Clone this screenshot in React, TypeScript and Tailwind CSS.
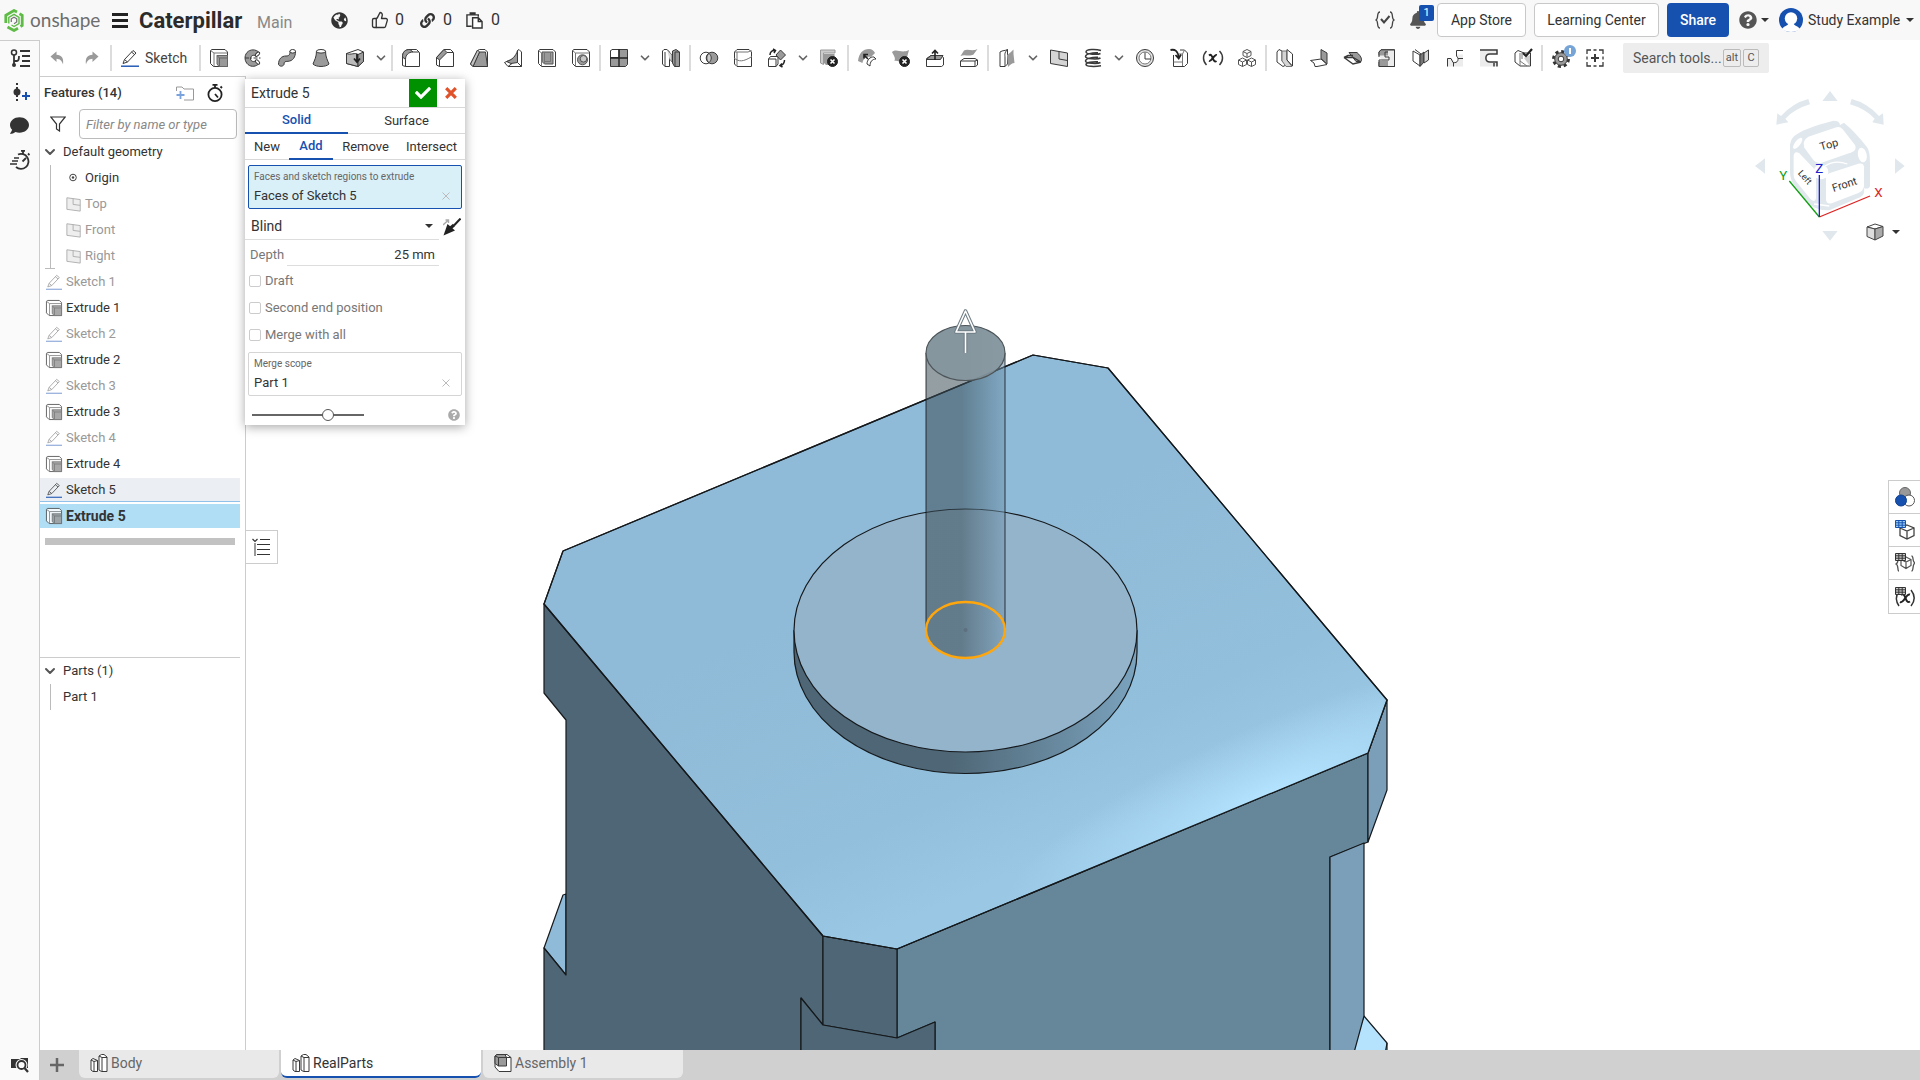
import { useState } from "react"
import type { ReactNode } from "react"
import { FaCheck, FaComment, FaLink, FaQuestionCircle, FaBell, FaGlobeAmericas } from "react-icons/fa"
import { ChevronDown, ThumbsUp } from "lucide-react"

const D = "#3a3a3a"
const G = "#9a9a9a"
const L = "#e4e4e4"

interface FeatureItem {
  name: string
  kind: "sketch" | "extrude"
  state?: "muted" | "related" | "selected"
}

const features: FeatureItem[] = [
  { name: "Sketch 1", kind: "sketch", state: "muted" },
  { name: "Extrude 1", kind: "extrude" },
  { name: "Sketch 2", kind: "sketch", state: "muted" },
  { name: "Extrude 2", kind: "extrude" },
  { name: "Sketch 3", kind: "sketch", state: "muted" },
  { name: "Extrude 3", kind: "extrude" },
  { name: "Sketch 4", kind: "sketch", state: "muted" },
  { name: "Extrude 4", kind: "extrude" },
  { name: "Sketch 5", kind: "sketch", state: "related" },
  { name: "Extrude 5", kind: "extrude", state: "selected" },
]

// All tool glyphs are drawn on an 18 x 18 grid
const glyphs: Record<string, ReactNode> = {
  undo: <path d="M2.500 7.500 L8.500 2.500 V5.800 C13.500 6 16 9 15 15.500 C13.800 11.500 12 10 8.500 9.800 V13 Z" fill={G} stroke="none" />,
  redo: <path d="M15.500 7.500 L9.500 2.500 V5.800 C4.500 6 2 9 3 15.500 C4.200 11.500 6 10 9.500 9.800 V13 Z" fill={G} stroke="none" />,
  extrude: (
    <>
      <path d="M.5 1.500 L2 .5 H15 L17.500 3 V17.500 H3.500 L.5 14.500 Z" fill="#fff" />
      <path d="M.5 1.500 L4 4 V17.500 M4 4 H17.500" stroke="#777" />
      <path d="M7 6.500 H17.500 V17.500 H9 L7 15 Z" fill={G} stroke="#666" />
      <path d="M7 6.500 L9.500 9 V17 M9.500 9 H17" stroke="#666" />
    </>
  ),
  revolve: (
    <>
      <path d="M15 3.500 C12 0 6 0 3 3.500 C0 7 .5 12.500 4 15.500 C7.500 18.500 12.500 17.500 15 14.500 L12 11.500 C10 13.500 7 12.500 6.500 10 C6 7.500 9 5 12 7 Z" fill={G} />
      <ellipse cx="13.500" cy="5.200" rx="2.600" ry="1.400" transform="rotate(-45 13.500 5.200)" fill="#fff" />
      <ellipse cx="13.500" cy="13" rx="2.600" ry="1.400" transform="rotate(45 13.500 13)" fill="#fff" />
      <path d="M1 9 H18" strokeDasharray="4 1.500 1.500 1.500" />
    </>
  ),
  sweep: (
    <>
      <path d="M12 2 C12 6 11 7 8 7 C3.500 7 .5 10 .5 15.500 C2 18 5 17.500 6 15.500 C6 12.500 7 12.500 10 12.300 C15 12 17.500 8 17.500 2.500 Z" fill={G} />
      <ellipse cx="14.700" cy="2.300" rx="2.800" ry="1.800" fill="#fff" />
    </>
  ),
  loft: (
    <>
      <path d="M4.500 2 C4.500 8 2.500 11 1 15 C4 18.300 14 18.300 17 15 C15.500 11 13.500 8 13.500 2 Z" fill={G} />
      <ellipse cx="9" cy="2.300" rx="4.500" ry="1.800" fill="#fff" />
    </>
  ),
  thicken: (
    <>
      <path d="M.5 4.500 L12 .5 L17.500 3 V12.500 L12 17.500 L.5 14.500 Z" fill="#fff" />
      <path d="M.5 4.500 C5 6.500 9 3 12 5.500 V17.500 L.5 14.500 Z" fill="#bbb" />
      <path d="M12 5.500 L17.500 3 V12.500 L12 17.500 Z" fill={G} />
      <path d="M11 5 V12 M8 9.500 L11 13 L14 9.500" strokeWidth="1.800" stroke="#222" />
    </>
  ),
  fillet: (
    <>
      <path d="M.5 16.500 V8 C.5 3 3 .5 8 .5 H14.500 L17.500 3.500 V17.500 H3.500 Z" fill="#fff" />
      <path d="M.5 8 C.5 3 3 .5 8 .5 L11 3 C6.500 3 3.500 6 3.500 10.500 Z" fill={G} />
      <path d="M3.500 10.500 V17.500 M11 3 H17" />
    </>
  ),
  chamfer: (
    <>
      <path d="M.5 16 V8.500 L8 .5 H14.500 L17.500 3.500 V17.500 H3.500 Z" fill="#fff" />
      <path d="M.5 8.500 L8 .5 L11 3.500 L3.500 11 Z" fill={G} />
      <path d="M3.500 11 V17.500 M11 3.500 H17" />
    </>
  ),
  draft: (
    <>
      <path d="M.5 15 L7.500 1.500 L9.500 .5 H15 L17.500 3 V17.500 H3 Z" fill="#fff" />
      <path d="M3 17.500 L9.500 3 H15.500 L17.500 17.500 Z" fill={G} />
      <path d="M.5 15 L7.500 1 L9.500 3 L3 17.500 Z" fill="#c4c4c4" />
    </>
  ),
  rib: (
    <>
      <path d="M.5 13.500 L5 11.500 L13.500 9 V1.500 L15 .5 L17.500 3 V17.500 H4 Z" fill="#fff" />
      <path d="M2.500 12.500 C8 11 12 7 13.500 1.500 V13.500 L7 14.500 Z" fill={G} />
      <path d="M13.500 13.500 L17.500 17.500 M4 17.500 L8 14.500" />
    </>
  ),
  shell: (
    <>
      <path d="M.5 1.500 L2 .5 H15 L17.500 3 V17.500 H3.500 L.5 14.500 Z" fill="#fff" />
      <path d="M4 3 H15 V15 H6.500 L4 12.500 Z" fill={G} stroke="#555" />
      <path d="M6.500 3 V15 M6.500 12.500 H12.500 V3 M.5 1.500 L3.500 4 V17.500" stroke="#777" />
    </>
  ),
  hole: (
    <>
      <path d="M.5 1.500 L2 .5 H15 L17.500 3 V17.500 H3.500 L.5 14.500 Z" fill="#fff" />
      <path d="M.5 1.500 L3.500 4 V17.500 M3.500 4 H17.500" stroke="#777" />
      <circle cx="10.500" cy="10.800" r="5" fill={G} stroke="#555" />
      <circle cx="11.500" cy="9.800" r="3.300" fill="#c8c8c8" stroke="#555" />
    </>
  ),
  pattern: (
    <>
      <path d="M.5 2 L2 .5 H17.500 V15.500 L15.500 17.500 H.5 Z" fill={G} />
      <path d="M.5 2 L2 .5 H9 V8.500 H.5 Z" fill="#fff" />
      <path d="M0 9 H18 M9 0 V18" stroke="#222" strokeWidth="1.400" />
    </>
  ),
  mirror: (
    <>
      <path d="M.5 2 L2 .5 H5 L7.500 3 V17.500 H3 L.5 15 Z M3 3 V17.500" fill="#fff" />
      <path d="M5 .5 L10 6 V13 L7.500 10" fill="#d8d8d8" stroke="#777" />
      <path d="M10.500 2 L14 .5 L17.500 3 V17.500 H12.500 L10.500 14 Z" fill={G} />
      <path d="M13 3 H17.500 M13 3 V17.500" />
    </>
  ),
  boolean: (
    <>
      <circle cx="6" cy="9" r="5.800" fill="#fff" />
      <circle cx="12" cy="9" r="5.800" fill={G} />
      <path d="M9 4.500 C6 7 6 11 9 13.500 C12 11 12 7 9 4.500 Z" fill="#ccc" />
    </>
  ),
  split: (
    <>
      <path d="M.5 3 L3 .5 H15 L17.500 3 V17.500 H3 L.5 15 Z" fill="#fff" />
      <path d="M.5 3 H14 L17.500 1.500 M3 3 V17" stroke="#777" />
      <path d="M0 9 C5 13 9 13 18 7.500" stroke="#777" />
    </>
  ),
  transform: (
    <>
      <path d="M.5 10 L2.500 7.500 H10 V15 L8 17.500 H.5 Z M.5 10 H8 V17.500" fill="#fff" />
      <path d="M12.500 1 L17.500 6 L12.500 11 L8 6 Z" fill={G} />
      <path d="M2 6 C2 3 4 1 7 1.500 M5 0 L7.500 1.500 L6 4 M16.500 11 C16.500 14 15 16 12 16.500 M14 14.500 L12 16.500 L14.500 18" stroke="#222" strokeWidth="1.500" />
    </>
  ),
  deletePart: (
    <>
      <path d="M.5 1 H15 V4 H3.500 V15.500 L.5 14 Z" fill="#ccc" stroke={G} />
      <path d="M4 5 H14.500 V16 H6 L4 14 Z" fill={G} stroke="none" />
      <circle cx="12.500" cy="12.500" r="5" fill="#222" stroke="#222" />
      <path d="M10.500 10.500 L14.500 14.500 M14.500 10.500 L10.500 14.500" stroke="#fff" strokeWidth="1.600" />
    </>
  ),
  modifyFillet: (
    <>
      <path d="M0 12 C1 4 5 0 11 0 C14 0 16 2 17 4 L13 8 C10 7 5 9 4.500 14 Z" fill={G} stroke="none" />
      <path d="M9 15 C9 11 12 7.500 16 8 L18 10 C14 10 12 13 12 17 Z" fill="#fff" />
      <path d="M10 10 L6 6 M6 9.500 V5.500 H10" stroke="#222" strokeWidth="1.600" />
    </>
  ),
  deleteFace: (
    <>
      <path d="M0 3 C5 -1 9 5 17 1 L14 12 C10 15 6 11 2.500 12 C4 8 1 6 0 3 Z" fill={G} stroke="none" />
      <circle cx="12.500" cy="12.500" r="5" fill="#222" stroke="#222" />
      <path d="M10.500 10.500 L14.500 14.500 M14.500 10.500 L10.500 14.500" stroke="#fff" strokeWidth="1.600" />
    </>
  ),
  moveFace: (
    <>
      <path d="M.5 9.500 L5 6.500 H15 L17.500 8.500 V16 L15.500 17.500 H.5 Z" fill="#fff" />
      <path d="M.5 10.500 L5 6.500 H17 L14.500 10.500 Z" fill={G} />
      <path d="M9 11 V2 M6 4.500 L9 1.500 L12 4.500" stroke="#222" strokeWidth="1.600" />
    </>
  ),
  replaceFace: (
    <>
      <path d="M4 1.500 C8 -1 12 3 17.500 0 L13.500 5.500 C9 8 5 5 .5 7 Z" fill={G} stroke="none" />
      <path d="M.5 12 L4 9.500 H15 L17.500 11 V16 L15.500 17.500 H.5 Z M.5 12 H15 L17.500 11 M15 12 V17.500" fill="#fff" />
    </>
  ),
  offsetSurface: (
    <>
      <path d="M2 3 C5 1 7 2 9.500 .5 V15 L7 17.500 H2 Z" fill="#fff" />
      <path d="M9.500 .5 C6 4 7 6 7 8 V17.500" />
      <path d="M9 6 C11 5 13 3 15.500 .5 V5 L16.500 14 C14 14 12 16 10 18 Z" fill={G} stroke="none" />
    </>
  ),
  plane: (
    <>
      <path d="M.5 1 L17.500 4 V17.500 L.5 14.500 Z" fill="#d5d5d5" />
      <path d="M9 2.500 V10 L17.500 11.500" />
    </>
  ),
  helix: (
    <path
      d="M17 1.500 C12 0 2 0 2 3 C2 5.500 14 5.800 16.500 4.500 M14 3.800 C8 3.500 1.500 5 1.500 7.500 C1.500 10.200 14 10.500 16.500 9 M14 8.300 C8 8 1.500 9.500 1.500 12 C1.500 14.700 14 15 16.500 13.500 M14 12.800 C8 12.500 2 13.500 2 15.500 C2 17.500 10 18 17 16.800"
      strokeWidth="1.500"
    />
  ),
  curve: (
    <>
      <circle cx="9" cy="9" r="8.500" fill={L} />
      <circle cx="9" cy="9" r="6" stroke="#777" fill="#fff" />
      <path d="M9 3.500 V10 H15" />
    </>
  ),
  importPart: (
    <>
      <path d="M3.500 6 V17.500 H14.500 L17.500 14.500 V4 L14.500 1 H10" fill="#fff" />
      <path d="M3.500 13 H12.500 V17 M12.500 13 V5 H9 M14.500 1 L12.500 5" stroke="#777" />
      <path d="M.5 1 C5 0 8 2 8.500 8 M5.500 6 L8.700 9.500 L11 5.500" stroke="#222" strokeWidth="1.800" />
    </>
  ),
  variable: (
    <>
      <path d="M2.500 2 C-1.500 6 -1.500 12 2.500 16 M15.500 2 C19.500 6 19.500 12 15.500 16" strokeWidth="1.500" />
      <path d="M5 6.500 C9 3 8.500 15 12.500 12 M12.800 6 C10 5 7.500 13 5 12" strokeWidth="2" stroke="#222" />
    </>
  ),
  cubes: (
    <>
      <path d="M9 .5 L13 2.500 V6.500 L9 8.500 L5 6.500 V2.500 Z M5 2.500 L9 4.500 L13 2.500 M9 4.500 V8.500" fill="#fff" stroke="#555" />
      <path d="M4.500 9 L8.500 11 V15.500 L4.500 17.500 L.5 15.500 V11 Z M.5 11 L4.500 13 L8.500 11 M4.500 13 V17.500" fill="#fff" stroke="#555" />
      <path d="M13.500 9 L17.500 11 V15.500 L13.500 17.500 L9.500 15.500 V11 Z M9.500 11 L13.500 13 L17.500 11 M13.500 13 V17.500" fill="#fff" stroke="#555" />
    </>
  ),
  sheetModel: (
    <>
      <path d="M1 3 L3 .5 L6 2 V12 L10 16 L7 17.500 L1 13 Z" fill="#fff" />
      <path d="M6 2 H11 V11 L16 17.500 H10 L6 12 Z" fill="#d5d5d5" stroke="#777" />
      <path d="M11 .5 L16.500 5 V17 L11 11 Z" fill="#fff" />
    </>
  ),
  flange: (
    <>
      <path d="M11 .5 L17 4 V15 L11 9.500 Z" fill={G} />
      <path d="M.5 11.500 L11 10 L17 15.500 L7 17.500 H5 L4 14 Z" fill="#fff" />
    </>
  ),
  hem: (
    <>
      <path d="M5 3.500 H13 C18 8 18 11 17 12.500 H12 Z" fill={G} />
      <path d="M0 8.500 L4 6.500 H9 M0 8.500 L9 15 L17 13 M0 8.500 H9 L17 13" fill="none" strokeWidth="1.400" />
    </>
  ),
  tab: (
    <>
      <path d="M1 6.500 V3 L3 .8 H16.500 V17.500 H1 V13 H5" fill="#ececec" />
      <path d="M1 3 L3 .8 H10 V6.500 H1 Z M1 12 H10 V17.500 H1 Z" fill={G} stroke="none" />
      <path d="M10 3 H7 V8 H11 V11 H1 V17.500 H16.500 V.8 H3 L1 3 V8" />
    </>
  ),
  bend: (
    <>
      <path d="M1 2 L8 6 V17 L1 12 Z" fill="#fff" />
      <path d="M3 .5 L9 5 V16" />
      <path d="M8 6 L12 3 V13 L8 17.500 Z" fill="#777" />
      <path d="M12 4 L16.500 1 V11 L12 14 Z" fill="#d5d5d5" />
    </>
  ),
  relief: (
    <>
      <path d="M1 17.500 V9 H5 L9 13 C13 13 13 9 10.500 7 V5.500 H17 V17.500 Z" fill="#ececec" stroke="none" />
      <path d="M1.500 17.500 V9.500 H5 L7 13.500 C12 14.500 13.500 10 10.500 7 V1.500 H17 M12 9.500 H17 M7.500 14 V17.500" />
    </>
  ),
  corner: (
    <>
      <path d="M0 2 H17 V5 H10 C4 5 4 13 10 13 H17 V17.500 H0 Z" fill="#ececec" stroke="none" />
      <path d="M0 1 H17 V5 H10 C4.500 5 4.500 13 10 13 H17 V17.500 M14 17.500 V14" strokeWidth="1.500" />
    </>
  ),
  finish: (
    <>
      <path d="M1 4 L4 1.500 L10 4 H16.500 V17 H6 L1 13 Z" fill="#fff" />
      <path d="M6 4 V17 M6 12 L13 17 M8 4 V10" stroke="#777" />
      <path d="M10 9 L16 6 V17 Z" fill="#ccc" stroke="none" />
      <path d="M9 4 L12 7 L18 0" stroke="#222" strokeWidth="2.200" />
    </>
  ),
  gear: (
    <>
      <circle cx="9" cy="10" r="7.200" fill="none" stroke="#333" strokeWidth="3.500" strokeDasharray="3 2.650" />
      <circle cx="9" cy="10" r="6.300" fill={G} />
      <circle cx="9" cy="10" r="2.800" fill="#fff" />
    </>
  ),
  addTool: (
    <>
      <path d="M1 5 V1 H5 M13 1 H17 V5 M17 13 V17 H13 M5 17 H1 V13 M7.500 1 H10.500 M7.500 17 H10.500 M1 7.500 V10.500 M17 7.500 V10.500" strokeWidth="1.300" />
      <path d="M9 5 V13 M5 9 H13" strokeWidth="2" />
    </>
  ),
  sketch: (
    <>
      <path d="M2 14.500 L3.500 10.500 L12 1.500 L15 4 L6.500 13 Z M3.500 10.500 L6.500 13 M10.500 3 L13.500 5.500" />
      <path d="M0 17.200 H18" stroke="#1651b0" strokeWidth="1.400" />
    </>
  ),
  partStudio: (
    <>
      <path d="M1 6 L3 4.500 L7.500 6.500 V17.500 H3 L1 16 Z M1 6 L4 7.500 V17.500 M4 7.500 L7.500 6.500" fill="#fff" />
      <path d="M9 2 L11.500 .5 H14 L17 3 V17.500 H11.500 L9 16 Z M9 2 L12 3.500 V17.500 M12 3.500 H17" fill="#fff" />
    </>
  ),
  assembly: (
    <>
      <path d="M1 2 L3 .5 H13 L17 3.500 V17.500 H5 L1 13 Z" fill="#fff" />
      <path d="M1 2 L3 .5 H11 L12.500 3.500 V12 H4.500 L1 9.500 Z" fill={G} />
      <path d="M1 2 L4.500 3.500 V12 M4.500 3.500 H17" />
    </>
  ),
  planeMuted: (
    <>
      <path d="M1 2 L16 4 V17 L1 15 Z" fill="#eee" stroke="#aaa" />
      <path d="M8 3 V9.500 L16 10.500" stroke="#aaa" />
    </>
  ),
}

function Glyph({ name, className = "size-[18px]" }: { name: string; className?: string }) {
  return (
    <svg viewBox="0 0 18 18" className={`shrink-0 overflow-visible ${className}`} fill="none" stroke={D} strokeWidth="1" aria-hidden="true">
      {glyphs[name]}
    </svg>
  )
}

// "|" is a divider, "v" a drop-down arrow for the tool before it
const tools = [
  "extrude", "revolve", "sweep", "loft", "thicken", "v", "|",
  "fillet", "chamfer", "draft", "rib", "shell", "hole", "|",
  "pattern", "v", "mirror", "|",
  "boolean", "split", "transform", "v", "deletePart", "|",
  "modifyFillet", "deleteFace", "moveFace", "replaceFace", "|",
  "offsetSurface", "v", "plane", "helix", "v", "curve", "importPart", "variable", "cubes", "|",
  "sheetModel", "flange", "hem", "tab", "bend", "relief", "corner", "finish", "|",
]

function Divider() {
  return <span className="mx-px h-[26px] w-0.5 shrink-0 bg-[#dcdcdc]" />
}

function Caret() {
  return <span className="inline-block border-x-4 border-t-4 border-x-transparent border-t-[#333]" />
}

function Header() {
  return (
    <header className="flex h-10 shrink-0 items-center bg-[#f8f8f8] text-[#333]">
      <a href="#home" className="ml-1 flex w-[100px] items-center gap-1.5" aria-label="onshape">
        <svg viewBox="0 0 20 23" className="h-[23px] w-5 shrink-0" fill="none" aria-hidden="true">
          <path d="M13 3 L10 1.500 L1.800 6.300 V14 M3.500 18 L10 21.500 L14 19.200 M16.500 17.500 L18.200 16.500 V6.300 L15.500 4.800" stroke="#5dbb46" strokeWidth="2.800" />
          <path d="M4.800 14.500 V8.300 L10 5.300 L15 8.300 V14.500 L10 17.500 L7.500 16" stroke="#5dbb46" strokeWidth="1.400" />
          <path d="M7.300 13 V9.800 L10 8.200 L12.700 9.800 V13 L10 14.700" stroke="#777" strokeWidth="1.300" />
        </svg>
        <span className="font-['Lato',sans-serif] text-[19px] leading-6 text-[#6d6d6d]">onshape</span>
      </a>
      <button className="ml-2 flex w-4 flex-col gap-[3px]" aria-label="Menu">
        <span className="h-[3px] bg-[#222]" />
        <span className="h-[3px] bg-[#222]" />
        <span className="h-[3px] bg-[#222]" />
      </button>
      <h1 className="ml-[11px] w-[112px] pt-0.5 text-[22px] font-bold leading-8 text-[#2b2b2b]">Caterpillar</h1>
      <span className="ml-1.5 w-9 pt-1.5 text-base leading-5 text-[#888]">Main</span>
      <button className="ml-[38px]" aria-label="Public document">
        <FaGlobeAmericas className="size-[17px]" />
      </button>
      <button className="ml-[23px] flex items-center gap-1.5 text-base">
        <ThumbsUp className="size-[18px]" strokeWidth={1.800} /> 0
      </button>
      <button className="ml-4 flex items-center gap-2 text-base">
        <FaLink className="size-[15px]" /> 0
      </button>
      <button className="ml-[14px] flex items-center gap-2 text-base">
        <svg viewBox="0 0 18 18" className="size-[17px]" fill="none" stroke="#333" strokeWidth="1.500" aria-hidden="true">
          <path d="M6 15 H1 V3 H13 V5" />
          <path d="M4.500 3 V1 H9.500 V3" fill="#333" />
          <path d="M7 6 H13 L17 10 V17 H7 Z M13 6 V10 H17" fill="#fff" />
        </svg>
        0
      </button>

      <div className="ml-auto flex items-center pr-1.5 text-sm">
        <button aria-label="Custom code">
          <svg viewBox="0 0 20 18" className="h-[18px] w-5" fill="none" stroke="#444" strokeWidth="1.300" aria-hidden="true">
            <path d="M5 1 C1 1 4 8 1 9 C4 10 1 17 5 17 M15 1 C19 1 16 8 19 9 C16 10 19 17 15 17" />
            <path d="M6 8 L9 11.500 L14.500 5" strokeWidth="2" />
          </svg>
        </button>
        <button className="relative ml-[14px] mr-[10px]" aria-label="Notifications">
          <FaBell className="size-[18px] text-[#555]" />
          <span className="absolute -right-[7px] -top-1.5 h-4 w-[15px] rounded-xs bg-[#1651b0] text-center text-[11px] leading-4 text-white">1</span>
        </button>
        <button className="h-[34px] w-[89px] rounded-sm border border-[#c8c8c8] bg-white">App Store</button>
        <button className="ml-2 h-[34px] w-[125px] rounded-sm border border-[#c8c8c8] bg-white">Learning Center</button>
        <button className="ml-2 h-[34px] w-[62px] rounded-sm bg-[#1651b0] font-medium text-white">Share</button>
        <button className="ml-2.5 flex items-center gap-1" aria-label="Help">
          <FaQuestionCircle className="size-[18px] text-[#555]" />
          <Caret />
        </button>
        <button className="ml-2.5 flex items-center">
          <svg viewBox="0 0 24 24" className="mr-[5px] size-6" aria-hidden="true">
            <circle cx="12" cy="12" r="12" fill="#1651b0" />
            <circle cx="12" cy="10.500" r="6.200" fill="#fff" />
            <path d="M3 21 C6 17 9 18 9.500 15 H14.500 C15 18 18 17 21 21 C16 25 8 25 3 21 Z" fill="#fff" />
          </svg>
          <span className="mr-1 w-[94px] whitespace-nowrap text-left">Study Example</span>
          <Caret />
        </button>
      </div>
    </header>
  )
}

function Rail() {
  return (
    <nav className="flex w-10 shrink-0 flex-col items-center border-r border-t border-[#ccc] bg-[#fafafa] text-[#333]" aria-label="Panels">
      <button className="flex h-[34px] items-center" aria-label="Feature list">
        <svg viewBox="0 0 20 19" className="h-[19px] w-5" fill="none" stroke="#333" strokeWidth="2" aria-hidden="true">
          <circle cx="4" cy="3.500" r="2.500" strokeWidth="1.500" />
          <path d="M4 6 V15 M4 12 H7 C9 12 9 10 9 7" strokeWidth="1.800" />
          <circle cx="4" cy="16" r="2" fill="#333" stroke="none" />
          <path d="M10 2 H20 M12 7 H20 M12 12 H20 M10 17 H20" />
        </svg>
      </button>
      <button className="flex h-[34px] items-center" aria-label="Insert version">
        <svg viewBox="0 0 20 20" className="size-5" fill="none" aria-hidden="true">
          <path d="M7 1 V20" stroke="#333" strokeWidth="2" strokeDasharray="2 2" />
          <circle cx="7" cy="10" r="3.500" fill="#333" />
          <path d="M16 10 V18 M12 14 H20" stroke="#1651b0" strokeWidth="2" />
        </svg>
      </button>
      <button className="flex h-8 items-center" aria-label="Comments">
        <FaComment className="size-[19px]" />
      </button>
      <button className="flex h-[38px] items-center" aria-label="Performance">
        <svg viewBox="0 0 20 20" className="size-5" fill="none" stroke="#333" strokeWidth="1.800" aria-hidden="true">
          <path d="M8 4.500 A7.500 7.500 0 1 1 6 17 M11 .8 H15 M13 1 V4 M18 3.500 L19.500 5 M12.500 11.500 L16 8" />
          <path d="M4 8 H9 M2 11 H8 M0 14 H7" strokeWidth="1.300" />
        </svg>
      </button>
      <button className="mt-auto flex h-[30px] items-center" aria-label="Search tabs">
        <svg viewBox="0 0 18 16" className="h-4 w-[18px]" fill="none" aria-hidden="true">
          <path d="M0 2 H9 L10 1 H17 V11 H0 Z" fill="#333" />
          <circle cx="10.500" cy="8" r="4.500" fill="#fafafa" stroke="#fafafa" strokeWidth="3" />
          <circle cx="10.500" cy="8" r="4" stroke="#333" strokeWidth="1.800" />
          <path d="M13.500 11 L17 15" stroke="#333" strokeWidth="2.200" />
        </svg>
      </button>
    </nav>
  )
}

function Toolbar() {
  return (
    <div className="flex h-9 shrink-0 items-center overflow-hidden bg-white" role="toolbar">
      <button className="flex w-[34px] justify-center" aria-label="Undo">
        <Glyph name="undo" />
      </button>
      <button className="flex w-[35px] justify-center" aria-label="Redo">
        <Glyph name="redo" />
      </button>
      <Divider />
      <button className="flex w-[85px] items-center gap-1.5 pl-2 text-sm text-[#444]">
        <Glyph name="sketch" />
        Sketch
      </button>
      <Divider />
      {tools.map((tool, index) => {
        if (tool === "|") return <Divider key={index} />
        if (tool === "v") {
          return (
            <button key={index} className="flex w-[18px] shrink-0 justify-center" aria-label="More tools">
              <ChevronDown className="size-3.5 text-[#666]" strokeWidth={3} />
            </button>
          )
        }
        return (
          <button key={index} className="flex w-[34px] shrink-0 justify-center" aria-label={tool}>
            <Glyph name={tool} />
          </button>
        )
      })}
      <button className="relative flex w-[34px] shrink-0 justify-center" aria-label="Custom features">
        <Glyph name="gear" />
        <span className="absolute -top-1 right-0.5 flex size-3 items-center justify-center rounded-full bg-[#76a4d6]">
          <span className="h-1.5 w-0.5 bg-white" />
        </span>
      </button>
      <button className="flex w-[34px] shrink-0 justify-center" aria-label="Add tool">
        <Glyph name="addTool" />
      </button>
      <button className="ml-[11px] flex h-[30px] w-[146px] shrink-0 items-center rounded-xs bg-[#ededed] pl-2.5 text-sm text-[#555]">
        <span className="w-[90px] whitespace-nowrap text-left">Search tools...</span>
        <kbd className="flex h-[18px] w-[18px] items-center justify-center rounded-xs border border-[#bbb] font-['Roboto',sans-serif] text-[11px]">alt</kbd>
        <kbd className="ml-0.5 flex h-[18px] w-4 items-center justify-center rounded-xs border border-[#bbb] font-['Roboto',sans-serif] text-[11px]">C</kbd>
      </button>
    </div>
  )
}

function FeatureRow({ item }: { item: FeatureItem }) {
  const tone =
    item.state === "selected"
      ? "h-6 my-px bg-[#b0def5] text-sm font-bold text-[#333]"
      : item.state === "related"
        ? "h-6 my-px bg-[#ebeff4] border-b border-[#8fc1ea] text-[#333]"
        : item.state === "muted"
          ? "h-[26px] text-[#999]"
          : "h-[26px] text-[#333]"
  return (
    <button className={`flex w-[200px] items-center pl-1.5 text-left ${tone}`}>
      <Glyph name={item.kind} className={item.state === "muted" ? "size-4 opacity-45" : "size-4 opacity-85"} />
      <span className="ml-1">{item.name}</span>
    </button>
  )
}

function Sidebar() {
  return (
    <aside className="flex w-[206px] shrink-0 flex-col border-r border-t border-[#ccc] bg-white text-[13px] text-[#333]">
      <div className="flex h-8 items-center pl-1">
        <h2 className="font-medium">Features (14)</h2>
        <button className="ml-auto" aria-label="Add folder">
          <svg viewBox="0 0 18 15" className="h-[15px] w-[18px]" fill="none" aria-hidden="true">
            <path d="M.5 5 V1 H6 L8 3 H17.500 V14 H8" stroke="#999" />
            <path d="M4.500 5 V13 M.5 9 H8.500" stroke="#7aa2dc" strokeWidth="1.800" />
          </svg>
        </button>
        <button className="ml-3 mr-[21px]" aria-label="Regeneration times">
          <svg viewBox="0 0 18 18" className="size-[18px]" fill="none" stroke="#222" strokeWidth="1.800" aria-hidden="true">
            <circle cx="9" cy="10.500" r="6.600" />
            <path d="M6.500 .9 H11.500 M9 1 V4 M14.500 2.500 L16 4 M9 10 L12 13.500" />
          </svg>
        </button>
      </div>
      <div className="flex h-[30px] items-center">
        <svg viewBox="0 0 16 16" className="ml-2.5 size-4" fill="none" stroke="#333" strokeWidth="1.200" aria-hidden="true">
          <path d="M.8 1 H15.200 L9.500 8 V15 L6.500 13 V8 Z" />
        </svg>
        <input
          aria-label="Filter"
          placeholder="Filter by name or type"
          className="ml-[13px] h-[30px] w-[158px] rounded-sm border border-[#bbb] pl-1.5 italic placeholder:text-[#888]"
        />
      </div>
      <button className="flex h-[26px] items-center pl-0.5 text-left">
        <ChevronDown className="size-4 text-[#555]" strokeWidth={3} />
        <span className="ml-[5px]">Default geometry</span>
      </button>
      <div className="flex h-[104px]">
        <div className="ml-[5px] w-2.5 border-b border-[#bbb] pl-[5px]">
          <div className="h-full w-px bg-[#bbb]" />
        </div>
        <ul className="ml-[11px]">
          <li className="flex h-[26px] items-center">
            <svg viewBox="0 0 16 16" className="size-4" fill="none" stroke="#444" aria-hidden="true">
              <circle cx="7" cy="7.500" r="3.300" />
              <circle cx="7" cy="7.500" r="1.200" fill="#444" stroke="none" />
            </svg>
            <span className="ml-[3px]">Origin</span>
          </li>
          {["Top", "Front", "Right"].map((name) => (
            <li key={name} className="flex h-[26px] items-center text-[#999]">
              <Glyph name="planeMuted" className="size-4" />
              <span className="ml-[3px]">{name}</span>
            </li>
          ))}
        </ul>
      </div>
      {features.map((item) => (
        <FeatureRow key={item.name} item={item} />
      ))}
      <div className="ml-[5px] mr-2.5 mt-[9px] h-[7px] bg-[#c2c2c2]" />
      <div className="mr-[5px] mt-28 border-t border-[#ccc]" />
      <button className="flex h-[26px] items-center pl-0.5 text-left">
        <ChevronDown className="size-4 text-[#555]" strokeWidth={3} />
        <span className="ml-[5px]">Parts (1)</span>
      </button>
      <div className="ml-2.5 flex h-[26px] items-center border-l border-[#bbb] pl-3">Part 1</div>
    </aside>
  )
}

function ClearButton({ label }: { label: string }) {
  return (
    <button className="mr-1.5" aria-label={label}>
      <svg viewBox="0 0 8 8" className="size-2" stroke="#bbb" strokeWidth="1" aria-hidden="true">
        <path d="M.5 .5 L7.500 7.500 M7.500 .5 L.5 7.500" />
      </svg>
    </button>
  )
}

function ExtrudePanel() {
  const [mode, setMode] = useState("Add")
  const modes = [
    { name: "New", width: "w-11" },
    { name: "Add", width: "w-[44px]" },
    { name: "Remove", width: "w-[65px]" },
    { name: "Intersect", width: "w-[67px]" },
  ]
  return (
    <section className="absolute -left-px top-[3px] w-[220px] bg-white text-[13px] text-[#333] shadow-[0_2px_10px_rgba(0,0,0,0.35)]">
      <div className="flex h-[29px] items-center border-b border-[#d8d8d8] pl-1.5">
        <h2 className="text-sm">Extrude 5</h2>
        <button className="ml-auto flex h-7 w-7 items-center justify-center bg-[#009100]" aria-label="Accept">
          <FaCheck className="size-4 text-white" />
        </button>
        <button className="flex w-7 justify-center" aria-label="Cancel">
          <svg viewBox="0 0 12 12" className="size-3" stroke="#e0522a" strokeWidth="3.200" aria-hidden="true">
            <path d="M1.200 1.200 L10.800 10.800 M10.800 1.200 L1.200 10.800" />
          </svg>
        </button>
      </div>
      <div className="flex h-[26px] border-b border-[#d8d8d8]">
        <button className="h-[26px] w-[103px] border-b-2 border-[#1651b0] font-medium text-[#1651b0]">Solid</button>
        <button className="flex-1">Surface</button>
      </div>
      <div className="flex h-[26px] border-b border-[#d8d8d8]">
        {modes.map((m) => (
          <button
            key={m.name}
            onClick={() => setMode(m.name)}
            className={`h-[26px] ${m.width} ${mode === m.name ? "border-b-2 border-[#1651b0] font-medium text-[#1651b0]" : ""}`}
          >
            {m.name}
          </button>
        ))}
      </div>
      <div className="mx-[3px] mt-[5px] h-11 rounded-xs border border-[#1651b0] bg-[#daf0f9] px-[5px]">
        <div className="pt-[3px] text-[10px] leading-4 text-[#666]">Faces and sketch regions to extrude</div>
        <div className="flex items-center justify-between leading-[22px]">
          <span>Faces of Sketch 5</span>
          <ClearButton label="Clear faces" />
        </div>
      </div>
      <div className="flex h-[31px] items-center">
        <div className="relative flex h-full w-[194px] items-center border-b border-[#ddd] pt-1">
          <select aria-label="End type" className="w-full appearance-none bg-transparent pl-1.5 text-sm" defaultValue="Blind">
            <option>Blind</option>
            <option>Up to next</option>
            <option>Through all</option>
          </select>
          <span className="pointer-events-none absolute right-1.5 flex">
            <Caret />
          </span>
        </div>
        <button className="ml-1 pt-1" aria-label="Opposite direction">
          <svg viewBox="0 0 18 18" className="size-[18px]" aria-hidden="true">
            <path d="M17.500 .5 L11 7.500" stroke="#222" strokeWidth="2" />
            <path d="M.5 17.500 L4.500 6 L12 12.500 Z" fill="#222" />
            <path d="M4 13 L11 7" stroke="#222" strokeWidth="3" />
            <path d="M0 7 L5.500 2 M2.500 2 H5.500 V5" stroke="#aaa" strokeWidth="1.400" fill="none" />
          </svg>
        </button>
      </div>
      <div className="flex h-[26px] items-center pl-[5px]">
        <label htmlFor="depth" className="w-[37px] pt-1 text-[#777]">Depth</label>
        <input id="depth" defaultValue="25 mm" className="h-full w-[152px] border-b border-[#ddd] pr-1 pt-1 text-right" />
      </div>
      <div className="pt-px">
        {["Draft", "Second end position", "Merge with all"].map((option) => (
          <label key={option} className="flex h-[27px] items-center pl-1 text-[#777]">
            <input type="checkbox" className="mr-1 size-3 appearance-none rounded-xs border border-[#ccc] bg-white" />
            {option}
          </label>
        ))}
      </div>
      <div className="mx-[3px] mt-1 h-11 rounded-xs border border-[#d5d5d5] px-[5px]">
        <div className="pt-[3px] text-[10px] leading-4 text-[#666]">Merge scope</div>
        <div className="flex items-center justify-between leading-[22px]">
          <span>Part 1</span>
          <ClearButton label="Clear merge scope" />
        </div>
      </div>
      <div className="flex h-[29px] items-center pl-[7px] pt-2">
        <input
          type="range"
          aria-label="Preview opacity"
          defaultValue={70}
          className="h-0.5 w-28 appearance-none bg-[#666] [&::-webkit-slider-thumb]:size-3 [&::-webkit-slider-thumb]:appearance-none [&::-webkit-slider-thumb]:rounded-full [&::-webkit-slider-thumb]:border [&::-webkit-slider-thumb]:border-[#555] [&::-webkit-slider-thumb]:bg-white"
        />
        <button className="ml-auto mr-[5px]" aria-label="Extrude help">
          <FaQuestionCircle className="size-3 text-[#aaa]" />
        </button>
      </div>
    </section>
  )
}

function Model() {
  return (
    <svg viewBox="246 76 1674 974" preserveAspectRatio="xMidYMid slice" className="absolute inset-0 size-full" stroke="#15191c" strokeWidth="1.200" strokeLinejoin="round" aria-label="Part preview">
      <defs>
        <linearGradient id="top" gradientUnits="userSpaceOnUse" x1="920" y1="560" x2="1050" y2="860">
          <stop offset="0" stopColor="#90bbd8" />
          <stop offset="0.700" stopColor="#92bfdb" />
          <stop offset="1" stopColor="#9ac8e4" />
        </linearGradient>
        <radialGradient id="glow" gradientUnits="userSpaceOnUse" cx="0" cy="0" r="1" gradientTransform="translate(1270 795) rotate(-24) scale(290 70)">
          <stop offset="0" stopColor="#b4e4ff" />
          <stop offset="0.500" stopColor="#b0dffb" stopOpacity="0.550" />
          <stop offset="1" stopColor="#b0dffb" stopOpacity="0" />
        </radialGradient>
        <linearGradient id="rim" x1="0" x2="1">
          <stop offset="0" stopColor="#4e6675" />
          <stop offset="0.450" stopColor="#4e6675" />
          <stop offset="1" stopColor="#7ba3be" />
        </linearGradient>
        <linearGradient id="shaft" x1="0" x2="1">
          <stop offset="0" stopColor="rgb(57,76,85)" />
          <stop offset="0.450" stopColor="rgb(57,76,85)" />
          <stop offset="1" stopColor="rgb(115,152,178)" />
        </linearGradient>
      </defs>

      {/* lower flange corners */}
      <path d="M544 948 L563 895 L566 894 V975 Z" fill="#8fbbd8" />
      <path d="M1364 1016 L1387 1043 L1387 1060 H1350 L1352 1050 Z" fill="#b5e3fd" />
      <path d="M1387 1043 L1384 1060" />

      {/* side faces */}
      <path d="M544 604 V693 L566 720 V975 L544 948 V1060 H801 V998 L823 1025 V936 Z" fill="#4e6675" />
      <path d="M897 949 L1368 753 V842 L1330 857 V1060 H935 V1022 L897 1038 Z" fill="#66879a" />
      <path d="M1368 753 L1387 700 V790 L1368 842 Z" fill="#7b9fb9" />
      <path d="M1330 857 L1364 843 V1016 L1352 1060 H1330 Z" fill="#7b9fb9" />
      <path d="M823 936 L897 949 V1038 L823 1025 Z" fill="#4e6675" />
      <path d="M801 1060 V998 L823 1025 L897 1038 L935 1022 V1060 Z" fill="#4e6675" />

      {/* top face */}
      <path d="M1033 355 L1108 368 L1387 700 L1368 753 L897 949 L823 936 L544 604 L563 551 Z" fill="url(#top)" />
      <path d="M1033 355 L1108 368 L1387 700 L1368 753 L897 949 L823 936 L544 604 L563 551 Z" fill="url(#glow)" />

      {/* disc */}
      <path d="M794 630.500 V652 A171.500 121.500 0 0 0 1137 652 V630.500 Z" fill="url(#rim)" />
      <ellipse cx="965.500" cy="630.500" rx="171.500" ry="121.500" fill="#94b4cc" />

      {/* extruded shaft */}
      <path d="M926 353 V630 A39.500 28 0 0 0 1005 630 V353 A39.500 27.500 0 0 0 926 353 Z" fill="url(#shaft)" fillOpacity="0.540" stroke="none" />
      <path d="M926 353 V630 M1005 353 V630" strokeOpacity="0.700" />
      <ellipse cx="965.500" cy="353" rx="39.500" ry="27.500" fill="#84959d" fillOpacity="0.900" stroke="#4d5559" />
      <ellipse cx="965.500" cy="630" rx="39.500" ry="28" fill="none" stroke="#ffa60c" strokeWidth="2.400" />
      <circle cx="965.500" cy="630" r="2" fill="#5d7080" stroke="none" />
      <g fill="none">
        <path d="M965.500 311 L956 332 H975 Z M965.500 332 V353" stroke="#6f7c84" strokeWidth="3.600" />
        <path d="M965.500 311 L956 332 H975 Z M965.500 332 V353" stroke="#fff" strokeWidth="1.600" />
      </g>
    </svg>
  )
}

function ViewCube() {
  return (
    <svg viewBox="0 0 540 510" className="h-[170px] w-[180px]" fill="none" aria-label="View cube">
      <g fill="#e0e8ee">
        <path d="M270 33 L293 63 H247 Z M270 482 L293 453 H247 Z M45 258 L75 235 V281 Z M494 258 L465 235 V281 Z" />
        <path d="M205 57 L210 73 Q165 86 136 116 L145 127 L109 134 L112 100 L123 108 Q158 69 205 57 Z" />
        <path d="M335 57 L330 73 Q375 86 404 116 L397 127 L431 134 L429 100 L417 108 Q382 69 335 57 Z" />
        <path d="M163 168 Q190 145 280 122 Q300 122 300 135 L312 128 Q345 155 380 200 Q390 210 390 250 V318 Q388 328 372 325 Q376 345 360 352 L270 390 Q240 395 205 372 L165 318 Q150 300 150 275 V195 Q152 178 163 168 Z" />
      </g>
      <path d="M205 170 L285 143 Q300 138 308 148 L345 195 Q352 210 335 217 L245 248 Q230 252 220 240 L193 203 Q186 182 205 170 Z" fill="#fff" />
      <path d="M258 295 Q258 283 270 279 L355 251 Q372 247 372 262 V318 Q370 333 355 339 L275 370 Q259 374 258 358 Z" fill="#fff" />
      <path d="M161 228 Q163 210 178 220 L218 262 Q228 272 228 285 V355 Q226 370 212 358 L168 304 Q161 296 161 285 Z" fill="#fff" />
      <ellipse cx="173" cy="190" rx="8" ry="20" transform="rotate(38 173 190)" fill="#fff" />
      <ellipse cx="367" cy="225" rx="13" ry="22" transform="rotate(-12 367 225)" fill="#fff" />
      <circle cx="243" cy="276" r="22" fill="#fff" />
      <path d="M255 258 Q285 238 322 252 M222 372 L268 378" stroke="#fff" strokeWidth="4" />
      <g fill="#333" fontFamily="Roboto, sans-serif" fontSize="33" textAnchor="middle">
        <text x="270" y="204" transform="rotate(-16 270 204)">Top</text>
        <text x="317" y="324" transform="rotate(-18 317 324)">Front</text>
        <text x="188" y="298" fontSize="27" transform="rotate(48 188 298)">Left</text>
      </g>
      <g strokeWidth="4">
        <path d="M238 411 L148 303" stroke="#12a012" />
        <path d="M238 411 L390 348" stroke="#dd2222" />
        <path d="M238 411 V285" stroke="#2222cc" />
      </g>
      <g fontFamily="Roboto, sans-serif" fontSize="40" textAnchor="middle">
        <text x="130" y="299" fill="#12a012">Y</text>
        <text x="415" y="351" fill="#dd2222">X</text>
        <text x="238" y="279" fill="#2222cc">Z</text>
      </g>
    </svg>
  )
}

function SideTools() {
  const grid = (fill: string, line: string) => (
    <g>
      <path d="M.5 .5 H10.500 V7.500 H.5 Z" fill={fill} stroke={line} />
      <path d="M.5 2.800 H10.500 M.5 5.200 H10.500 M3.800 .5 V7.500 M7.200 .5 V7.500" stroke={line} />
    </g>
  )
  const items = [
    <g key="look">
      <circle cx="10" cy="6" r="5.500" fill="#999" stroke="#666" />
      <circle cx="14" cy="13.500" r="5.500" fill="#fff" stroke="#555" />
      <circle cx="6" cy="13.500" r="5.500" fill="#1651b0" stroke="#12438f" />
    </g>,
    <g key="config">
      <path d="M12 5 L19 8 V15.500 L12 19 L5 15.500 V8 Z M5 8 L12 11 L19 8 M12 11 V19" fill="#fff" stroke="#444" strokeWidth="1.300" />
      {grid("#9bd0f5", "#1651b0")}
    </g>,
    <g key="props">
      <path d="M11 4 L16 6.500 V12.500 L11 15.500 L6 12.500 V6.500 Z M6 6.500 L11 9 L16 6.500 M11 9 V15" fill="#fff" stroke="#555" strokeWidth="1.200" />
      <path d="M4 5 C2 5 4 10 1 11 C4 12 2 18 4 18 M16.500 3 C19 3 17 9 20 10 C17 11 19 18 16.500 18" stroke="#555" strokeWidth="1.300" />
      {grid("#ccc", "#333")}
    </g>,
    <g key="vars">
      <path d="M4 5 C0 9 1 15 4 19 M16 3 C20 8 20 14 16 19" stroke="#333" strokeWidth="1.500" />
      <path d="M6 8 C11 4 10 18 15 14.500 M15 7.500 C11 6 9 17 5 15" stroke="#222" strokeWidth="2" />
      {grid("#ccc", "#333")}
    </g>,
  ]
  return (
    <div className="absolute right-0 top-[404px] w-8 divide-y divide-[#ccc] border border-r-0 border-[#ccc] bg-white">
      {items.map((item, index) => (
        <button key={index} className="flex h-[33px] w-full items-center justify-center" aria-label={`Panel ${index + 1}`}>
          <svg viewBox="0 0 20 20" className="size-5" fill="none" aria-hidden="true">
            {item}
          </svg>
        </button>
      ))}
    </div>
  )
}

function Viewport() {
  return (
    <main className="relative min-w-0 flex-1 bg-white">
      <div className="absolute inset-0 overflow-hidden">
        <Model />
      </div>
      <div className="absolute right-0 top-1">
        <ViewCube />
        <button className="absolute bottom-[9px] right-5 flex items-center gap-2" aria-label="View options">
          <svg viewBox="0 0 18 18" className="size-[18px]" stroke="#444" strokeLinejoin="round" aria-hidden="true">
            <path d="M9 1 L17 3.500 L9 6 L1 4 Z" fill="#fff" />
            <path d="M1 4 L9 6 V17 L1 13.500 Z" fill="#ddd" />
            <path d="M17 3.500 L9 6 V17 L17 13 Z" fill="#aaa" />
          </svg>
          <Caret />
        </button>
      </div>
      <button className="absolute left-0 top-[454px] flex h-[34px] w-8 items-center justify-center border border-l-0 border-[#ccc] bg-white pr-0.5" aria-label="Toggle list">
        <svg viewBox="0 0 18 18" className="size-[18px]" fill="none" stroke="#333" aria-hidden="true">
          <path d="M.5 1 L3 3.500 L5.500 1 M8 1.500 H18 M5 6.500 H18 M5 11.500 H18 M5 16.500 H18" strokeWidth="1.200" />
          <path d="M3 5 V18" stroke="#999" strokeWidth="2" />
        </svg>
      </button>
      <SideTools />
      <ExtrudePanel />
    </main>
  )
}

function TabBar() {
  const [active, setActive] = useState("RealParts")
  const tabs = [
    { name: "Body", icon: "partStudio" },
    { name: "RealParts", icon: "partStudio" },
    { name: "Assembly 1", icon: "assembly" },
  ]
  return (
    <footer className="flex h-[30px] shrink-0 bg-[#d0d0d0] text-sm">
      <button className="flex w-[39px] items-center justify-center pr-[5px]" aria-label="Add tab">
        <svg viewBox="0 0 14 14" className="size-3.5" stroke="#666" strokeWidth="2.500" aria-hidden="true">
          <path d="M7 0 V14 M0 7 H14" />
        </svg>
      </button>
      {tabs.map((tab) => (
        <button
          key={tab.name}
          onClick={() => setActive(tab.name)}
          className={`mr-0.5 flex h-7 w-[200px] items-center gap-[3px] rounded-b-md pl-[11px] ${
            active === tab.name ? "border-b-2 border-[#1651b0] bg-white text-[#333]" : "bg-[#e9e9e9] pb-0.5 text-[#666]"
          }`}
        >
          <Glyph name={tab.icon} />
          <span>{tab.name}</span>
        </button>
      ))}
    </footer>
  )
}

export default function App() {
  return (
    <div className="flex h-screen flex-col overflow-hidden bg-white font-['Roboto',sans-serif]">
      <Header />
      <div className="flex min-h-0 flex-1">
        <Rail />
        <div className="flex min-w-0 flex-1 flex-col">
          <Toolbar />
          <div className="flex min-h-0 flex-1">
            <Sidebar />
            <Viewport />
          </div>
          <TabBar />
        </div>
      </div>
    </div>
  )
}
